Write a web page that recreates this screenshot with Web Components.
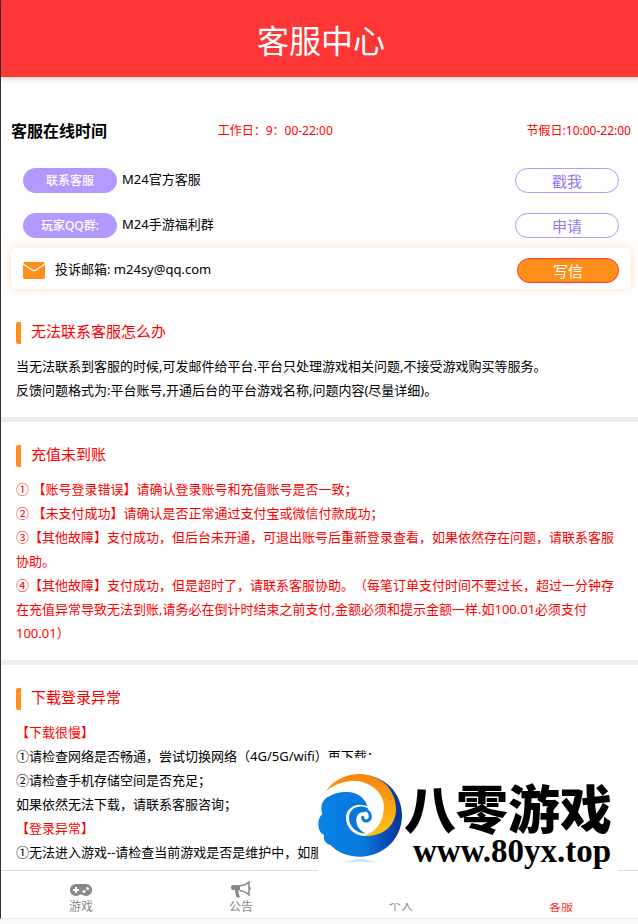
<!DOCTYPE html>
<html lang="zh-CN">
  <head>
    <meta charset="utf-8">
    <meta name="viewport" content="width=device-width, initial-scale=1">
    <title>客服中心</title>
    <style>
      html { background: #f9f9f9; }
      body {
        margin: 0;
        overflow: hidden;
        color: #000;
        font: 13px/24px "Noto Sans", "Noto Sans CJK SC", sans-serif;
        text-spacing-trim: space-all;
      }
      .red { color: #f00; }
    </style>
  </head>
  <body>
    <template id="app-shell">
      <style>
        :host {
          display: flex;
          flex-direction: column;
          box-sizing: border-box;
          height: calc(100vh - 5px);
          margin-right: -3px;
          border-left: 1px solid #333;
          border-bottom: 1px solid #eee;
          background: #fff;
        }
        header {
          position: relative;
          flex: none;
          padding: 17px 0 12px;
          background: #ff3636;
          box-shadow: 0 2px 5px rgba(0, 0, 0, .2);
          color: #fff;
          text-align: center;
        }
        h1 { margin: 0; font-size: 32px; line-height: 48px; font-weight: 400; }
        main { flex: 1; min-height: 0; overflow: hidden; padding-top: 36px; }
      </style>
      <header><h1><slot name="title"></slot></h1></header>
      <main><slot></slot></main>
      <slot name="nav"></slot>
    </template>

    <template id="service-hours">
      <style>
        :host {
          display: grid;
          grid-template-columns: 1fr 1fr 1fr;
          align-items: center;
          height: 36px;
          margin-bottom: 11px;
          padding: 0 10px;
        }
        h2 { margin: 0; font-size: 16px; line-height: 24px; font-weight: 700; }
        .time { color: #f00; font-size: 12px; }
        .end { text-align: right; }
      </style>
      <h2><slot name="label"></slot></h2>
      <span class="time"><slot name="workday"></slot></span>
      <span class="time end"><slot name="holiday"></slot></span>
    </template>

    <template id="contact-row">
      <style>
        :host {
          display: flex;
          align-items: center;
          box-sizing: border-box;
          height: 41px;
          margin: 0 10px 4px;
          padding: 0 12px;
          border-radius: 5px;
        }
        .badge {
          width: 94px;
          margin-right: 5px;
          border-radius: 13px;
          background: #b399ff;
          color: #fff;
          font-size: 12px;
          font-weight: 500;
          line-height: 25px;
          text-align: center;
        }
        svg { display: none; width: 22px; height: 17px; margin: 3px 10px 0 0; }
        .name { flex: 1; padding-bottom: 3px; }
        button {
          width: 104px;
          height: 25px;
          padding: 0;
          border: 1px solid #b399ff;
          border-radius: 13px;
          background: #fff;
          color: #9575f5;
          font: inherit;
          font-size: 15px;
          line-height: 25px;
        }
        :host([mail]) {
          margin-top: -2px;
          margin-bottom: 10px;
          box-shadow: 0 0 8px #ffdcb8;
        }
        :host([mail]) svg { display: block; }
        :host([mail]) .badge { display: none; }
        :host([mail]) .name { padding-bottom: 0; }
        :host([mail]) button {
          width: 102px;
          margin-top: 4px;
          border-color: #ff3636;
          background: #ff8f1a;
          color: #fff;
        }
      </style>
      <span class="badge"><slot name="badge"></slot></span>
      <svg viewBox="0 0 22 17" aria-hidden="true">
        <rect width="22" height="17" rx="2" fill="#ff8f1a"/>
        <path d="M0 2l9.5 6.2q1.5 1 3 0L22 2" fill="none" stroke="#fff" stroke-width="1.3"/>
      </svg>
      <span class="name"><slot></slot></span>
      <button type="button"><slot name="action"></slot></button>
    </template>

    <template id="help-section">
      <style>
        :host {
          display: block;
          padding: 23px 15px 15px;
          border-bottom: 5px solid #ededed;
        }
        h3 {
          margin: 0 0 10px;
          padding: 0 0 4px 15px;
          color: #f00;
          font-size: 15px;
          line-height: 18px;
          font-weight: 400;
          background: linear-gradient(#ff8f1a, #ff8f1a) left / 5px 100% no-repeat;
          border-radius: 2px;
        }
        ::slotted(p) { margin: 0; }
      </style>
      <h3><slot name="title"></slot></h3>
      <slot></slot>
    </template>

    <template id="tab-bar">
      <style>
        :host {
          display: grid;
          grid-template-columns: repeat(4, 1fr);
          flex: none;
          height: 47px;
          border-top: 1px solid #ddd;
          background: #fff;
        }
      </style>
      <slot></slot>
    </template>

    <template id="tab-item">
      <style>
        :host { display: block; }
        a {
          display: flex;
          flex-direction: column;
          align-items: center;
          padding-top: 10px;
          color: #888;
          font-size: 12px;
          line-height: 16px;
          text-decoration: none;
        }
        .icon { height: 18px; }
        :host([active]) a { color: #ff3636; }
      </style>
      <a href="#"><span class="icon"><slot name="icon"></slot></span><slot></slot></a>
    </template>

    <template id="site-mark">
      <style>
        :host {
          position: absolute;
          right: 20px;
          bottom: 21px;
          display: flex;
          box-sizing: border-box;
          width: 300px;
          height: 145px;
          padding-top: 14px;
          border-radius: 10px;
          background: #fff;
          color: #000;
        }
        svg { flex: none; width: 86px; height: 98px; }
        .words {
          display: flex;
          flex-direction: column;
          gap: 4px;
          padding-top: 13px;
          white-space: nowrap;
        }
        .name { font: 900 52px/52px "Liberation Sans", "Noto Sans CJK SC", sans-serif; }
        .url {
          padding-left: 9px;
          font: 700 33px/20px "Liberation Serif", serif;
        }
      </style>
      <svg viewBox="24 24 258 294" aria-hidden="true">
        <defs>
          <linearGradient id="sea" x1="0" y1="0" x2="1" y2="0">
            <stop offset="0" stop-color="#0883e6"/>
            <stop offset=".55" stop-color="#0877dc"/>
            <stop offset="1" stop-color="#06309a"/>
          </linearGradient>
          <linearGradient id="sun" x1="0" y1="0" x2="0" y2="1">
            <stop offset="0" stop-color="#f98410"/>
            <stop offset="1" stop-color="#ffc414"/>
          </linearGradient>
          <linearGradient id="shade" x1="0" y1="0" x2="0" y2="1">
            <stop offset="0" stop-color="#b5dcf3"/>
            <stop offset="1" stop-color="#fff"/>
          </linearGradient>
        </defs>
        <path d="M85 303Q150 268 215 303Q150 284 85 303" fill="url(#shade)"/>
        <path d="M150 32C228 32 276 90 276 154C276 225 220 278 150 278C112 278 80 264 62 243C46 240 39 226 42 213C21 202 19 165 37 151C29 128 38 104 58 97Z" fill="url(#sea)"/>
        <path d="M46 84C90 34 185 35 218 80C240 120 225 195 165 216C128 214 107 188 108 158C109 137 128 122 150 122L172 126C164 101 140 84 112 84C85 84 68 90 58 97Z" fill="#fff"/>
        <path d="M45 84C75 42 115 30 150 30C215 32 258 80 258 135C258 180 225 219 160 216C200 205 222 170 222 125C220 85 180 51 130 50C95 52 65 65 45 84Z" fill="url(#sun)"/>
        <path d="M175 133C145 119 117 134 117 162C117 188 138 207 168 209C148 200 139 186 139 168C139 151 151 143 163 145" fill="#0877dc"/>
        <path d="M130 160C134 132 178 128 181 156C181 174 158 176 158 160" fill="none" stroke="#0877dc" stroke-width="9" stroke-linecap="round"/>
      </svg>
      <div class="words">
        <span class="name"><slot></slot></span>
        <span class="url"><slot name="url"></slot></span>
      </div>
    </template>

    <app-shell>
      <span slot="title">客服中心</span>

      <service-hours>
        <span slot="label">客服在线时间</span>
        <span slot="workday">工作日：9：00-22:00</span>
        <span slot="holiday">节假日:10:00-22:00</span>
      </service-hours>

      <contact-row>
        <span slot="badge">联系客服</span>
        M24官方客服
        <span slot="action">戳我</span>
      </contact-row>
      <contact-row>
        <span slot="badge">玩家QQ群:</span>
        M24手游福利群
        <span slot="action">申请</span>
      </contact-row>
      <contact-row mail>
        投诉邮箱: m24sy@qq.com
        <span slot="action">写信</span>
      </contact-row>

      <help-section>
        <span slot="title">无法联系客服怎么办</span>
        <p>当无法联系到客服的时候,可发邮件给平台.平台只处理游戏相关问题,不接受游戏购买等服务。</p>
        <p>反馈问题格式为:平台账号,开通后台的平台游戏名称,问题内容(尽量详细)。</p>
      </help-section>

      <help-section>
        <span slot="title">充值未到账</span>
        <p class="red">① 【账号登录错误】请确认登录账号和充值账号是否一致；</p>
        <p class="red">② 【未支付成功】请确认是否正常通过支付宝或微信付款成功；</p>
        <p class="red">③【其他故障】支付成功，但后台未开通，可退出账号后重新登录查看，如果依然存在问题，请联系客服协助。</p>
        <p class="red">④【其他故障】支付成功，但是超时了，请联系客服协助。（每笔订单支付时间不要过长，超过一分钟存在充值异常导致无法到账,请务必在倒计时结束之前支付,金额必须和提示金额一样.如100.01必须支付100.01）</p>
      </help-section>

      <help-section>
        <span slot="title">下载登录异常</span>
        <p class="red">【下载很慢】</p>
        <p>①请检查网络是否畅通，尝试切换网络（4G/5G/wifi）再下载；</p>
        <p>②请检查手机存储空间是否充足；</p>
        <p>如果依然无法下载，请联系客服咨询；</p>
        <p class="red">【登录异常】</p>
        <p>①无法进入游戏--请检查当前游戏是否是维护中，如服</p>
      </help-section>

      <tab-bar slot="nav">
        <tab-item>
          <svg slot="icon" width="22" height="18" viewBox="0 0 22 18" aria-hidden="true">
            <path d="M6 3h10a6 6 0 1 1-4 10.400h-2A6 6 0 1 1 6 3" fill="#888"/>
            <path d="M6 6v6M3 9h6" stroke="#fff" stroke-width="2"/>
            <circle cx="14" cy="10.500" r="1.500" fill="#fff"/>
            <circle cx="17.500" cy="7.500" r="1.500" fill="#fff"/>
          </svg>
          游戏
        </tab-item>
        <tab-item>
          <svg slot="icon" width="20" height="18" viewBox="0 0 20 18" aria-hidden="true">
            <path d="M9 4H2Q0 4 0 6v1q0 2 2 2h2l1 6q.3 1.500 2 1.500h2L7.500 11.500V9H9z" fill="#888"/>
            <path d="M8.500 5Q14 4.500 18 1v13Q14 10 8.500 9.500" fill="none" stroke="#888" stroke-width="1.500"/>
            <path d="M18 5q3.500 2.500 0 5" fill="#888"/>
          </svg>
          公告
        </tab-item>
        <tab-item>个人</tab-item>
        <tab-item active>客服</tab-item>
      </tab-bar>
    </app-shell>

    <site-mark>八零游戏<span slot="url">www.80yx.top</span></site-mark>

    <script>
      function defineFromTemplate(name) {
        customElements.define(name,
          class extends HTMLElement {
            constructor() {
              super();
              const template = document.getElementById(name);
              this.attachShadow({mode: 'open'})
                .appendChild(template.content.cloneNode(true));
            }
          }
        );
      }

      [
        'app-shell',
        'service-hours',
        'contact-row',
        'help-section',
        'tab-bar',
        'tab-item',
        'site-mark'
      ].forEach(defineFromTemplate);
    </script>
  </body>
</html>
